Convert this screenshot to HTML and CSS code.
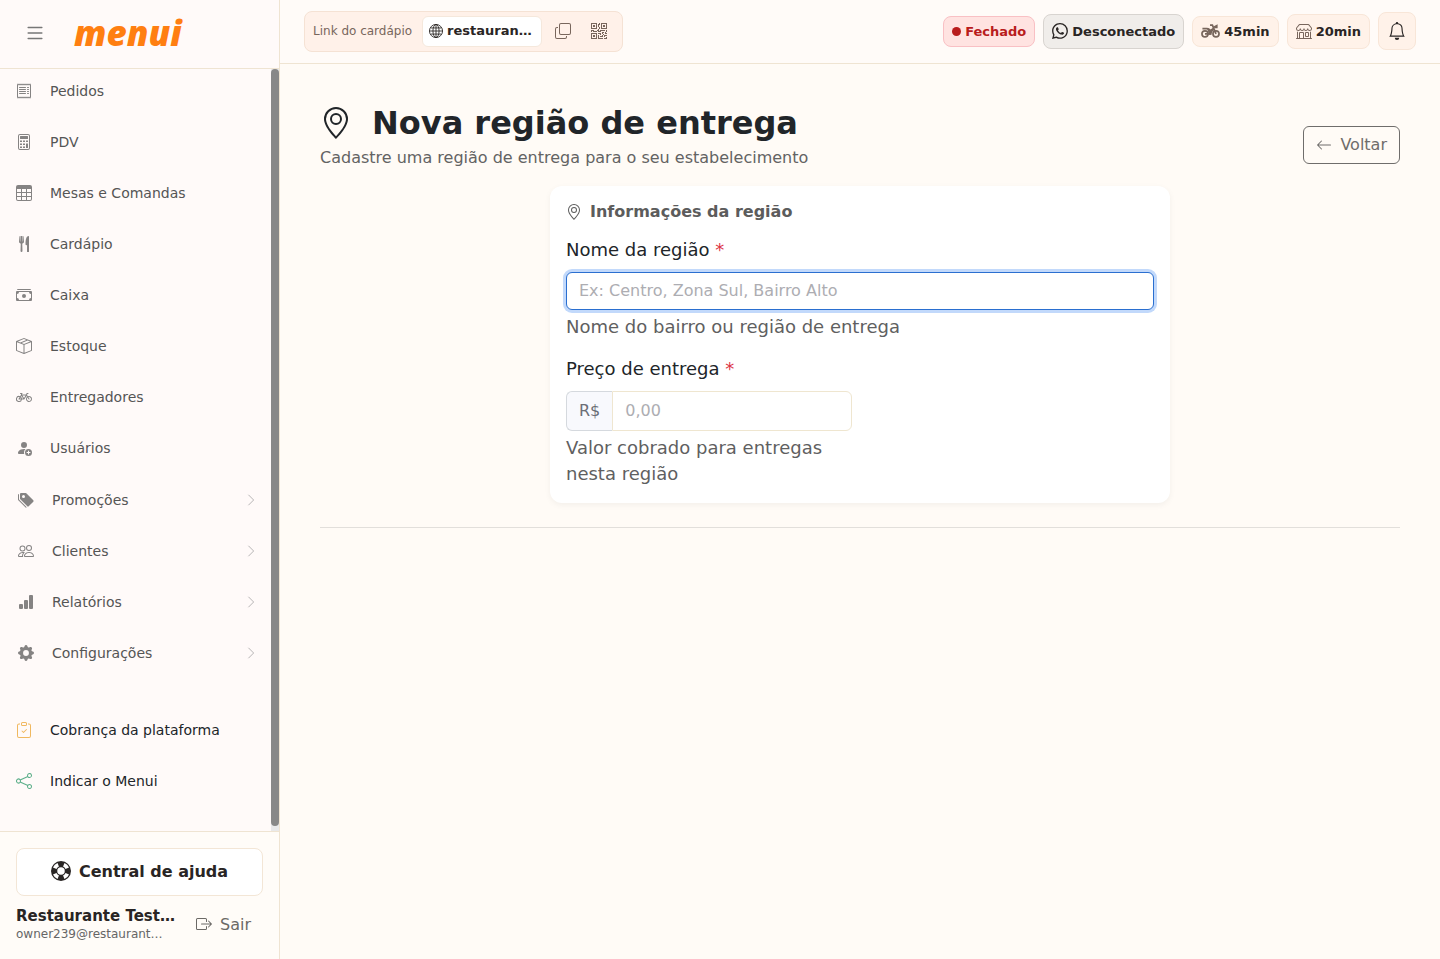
FILE: index.html
```html
<!DOCTYPE html>
<html lang="pt-BR">
<head>
    <meta charset="UTF-8">
    <meta name="viewport" content="width=device-width, initial-scale=1.0">
    <title>Nova região de entrega</title>
    <link rel="stylesheet" href="styles.css">
</head>
<body>
    <div class="app">
        <!-- Sidebar -->
        <aside class="sidebar">
            <div class="sidebar-header">
                <button type="button" class="menu-toggle" aria-label="Menu">
                    <svg class="icon" viewBox="0 0 16 16"><path fill-rule="evenodd" d="M2.500 12a.5.5 0 0 1 .5-.5h10a.5.5 0 0 1 0 1H3a.5.5 0 0 1-.5-.5m0-4a.5.5 0 0 1 .5-.5h10a.5.5 0 0 1 0 1H3a.5.5 0 0 1-.5-.5m0-4a.5.5 0 0 1 .5-.5h10a.5.5 0 0 1 0 1H3a.5.5 0 0 1-.5-.5"/></svg>
                </button>
                <a href="#" class="logo">menui</a>
            </div>

            <div class="sidebar-body">
                <nav class="sidebar-nav">
                    <ul class="nav-list">
                        <li><a href="#" class="nav-link">
                            <svg class="icon" viewBox="0 0 16 16"><path d="M1.920.506a.5.5 0 0 1 .434.14L3 1.293l.646-.647a.5.5 0 0 1 .708 0L5 1.293l.646-.647a.5.5 0 0 1 .708 0L7 1.293l.646-.647a.5.5 0 0 1 .708 0L9 1.293l.646-.647a.5.5 0 0 1 .708 0l.646.647.646-.647a.5.5 0 0 1 .708 0l.646.647.646-.647a.5.5 0 0 1 .801.13l.5 1A.5.5 0 0 1 15 2v12a.5.5 0 0 1-.053.224l-.5 1a.5.5 0 0 1-.8.13L13 14.707l-.646.647a.5.5 0 0 1-.708 0L11 14.707l-.646.647a.5.5 0 0 1-.708 0L9 14.707l-.646.647a.5.5 0 0 1-.708 0L7 14.707l-.646.647a.5.5 0 0 1-.708 0L5 14.707l-.646.647a.5.5 0 0 1-.708 0L3 14.707l-.646.647a.5.5 0 0 1-.801-.13l-.5-1A.5.5 0 0 1 1 14V2a.5.5 0 0 1 .053-.224l.5-1a.5.5 0 0 1 .367-.27m.217 1.338L2 2.118v11.764l.137.274.51-.51a.5.5 0 0 1 .707 0l.646.647.646-.646a.5.5 0 0 1 .708 0l.646.646.646-.646a.5.5 0 0 1 .708 0l.646.646.646-.646a.5.5 0 0 1 .708 0l.646.646.646-.646a.5.5 0 0 1 .708 0l.646.646.646-.646a.5.5 0 0 1 .708 0l.509.509.137-.274V2.118l-.137-.274-.51.51a.5.5 0 0 1-.707 0L12 1.707l-.646.647a.5.5 0 0 1-.708 0L10 1.707l-.646.647a.5.5 0 0 1-.708 0L8 1.707l-.646.647a.5.5 0 0 1-.708 0L6 1.707l-.646.647a.5.5 0 0 1-.708 0L4 1.707l-.646.647a.5.5 0 0 1-.708 0z"/><path d="M3 4.500a.5.5 0 0 1 .5-.5h6a.5.5 0 1 1 0 1h-6a.5.5 0 0 1-.5-.5m0 2a.5.5 0 0 1 .5-.5h6a.5.5 0 1 1 0 1h-6a.5.5 0 0 1-.5-.5m0 2a.5.5 0 0 1 .5-.5h6a.5.5 0 1 1 0 1h-6a.5.5 0 0 1-.5-.5m0 2a.5.5 0 0 1 .5-.5h6a.5.5 0 0 1 0 1h-6a.5.5 0 0 1-.5-.5m8-6a.5.5 0 0 1 .5-.5h1a.5.5 0 0 1 0 1h-1a.5.5 0 0 1-.5-.5m0 2a.5.5 0 0 1 .5-.5h1a.5.5 0 0 1 0 1h-1a.5.5 0 0 1-.5-.5m0 2a.5.5 0 0 1 .5-.5h1a.5.5 0 0 1 0 1h-1a.5.5 0 0 1-.5-.5m0 2a.5.5 0 0 1 .5-.5h1a.5.5 0 0 1 0 1h-1a.5.5 0 0 1-.5-.5"/></svg>
                            <span>Pedidos</span></a></li>
                        <li><a href="#" class="nav-link">
                            <svg class="icon" viewBox="0 0 16 16"><path d="M12 1a1 1 0 0 1 1 1v12a1 1 0 0 1-1 1H4a1 1 0 0 1-1-1V2a1 1 0 0 1 1-1zM4 0a2 2 0 0 0-2 2v12a2 2 0 0 0 2 2h8a2 2 0 0 0 2-2V2a2 2 0 0 0-2-2z"/><path d="M4 2.500a.5.5 0 0 1 .5-.5h7a.5.5 0 0 1 .5.5v2a.5.5 0 0 1-.5.5h-7a.5.5 0 0 1-.5-.5zM4 6.500h2v1.500H4zM7 6.500h2v1.500H7zM10 6.500h2v1.500h-2zM4 9.500h2v1.500H4zM7 9.500h2v1.500H7zM4 12.500h2V14H4zM7 12.500h2V14H7zM10 9.500h2V14h-2z"/></svg>
                            <span>PDV</span></a></li>
                        <li><a href="#" class="nav-link">
                            <svg class="icon" viewBox="0 0 16 16"><path d="M0 2a2 2 0 0 1 2-2h12a2 2 0 0 1 2 2v12a2 2 0 0 1-2 2H2a2 2 0 0 1-2-2zm15 2h-4v3h4zm0 4h-4v3h4zm0 4h-4v3h3a1 1 0 0 0 1-1zm-5 3v-3H6v3zm-5 0v-3H1v2a1 1 0 0 0 1 1zm-4-4h4V8H1zm0-4h4V4H1zm5-3v3h4V4zm4 4H6v3h4z"/></svg>
                            <span>Mesas e Comandas</span></a></li>
                        <li><a href="#" class="nav-link">
                            <svg class="icon" viewBox="0 0 16 16"><path d="M13 .500c0-.276-.226-.506-.498-.465-1.703.257-2.940 2.012-3 8.462a.5.5 0 0 0 .498.5c.56.010 1 .130 1 1.003v5.500a.5.5 0 0 0 .5.5h1a.5.5 0 0 0 .5-.5zM4.250 0a.25.25 0 0 1 .25.25v5.122a.128.128 0 0 0 .256.006l.233-5.140A.25.25 0 0 1 5.240 0h.522a.25.25 0 0 1 .25.238l.233 5.140a.128.128 0 0 0 .256-.006V.250A.25.25 0 0 1 6.750 0h.290a.5.5 0 0 1 .498.458l.423 5.070a1.690 1.690 0 0 1-1.059 1.711l-.053.022a.92.92 0 0 0-.58.884L6.470 15a.971.971 0 1 1-1.942 0l.202-6.855a.92.92 0 0 0-.58-.884l-.053-.022a1.690 1.690 0 0 1-1.059-1.712L3.462.458A.5.5 0 0 1 3.960 0z"/></svg>
                            <span>Cardápio</span></a></li>
                        <li><a href="#" class="nav-link">
                            <svg class="icon" viewBox="0 0 16 16"><path d="M1 3a1 1 0 0 1 1-1h12a1 1 0 0 1 1 1zm7 8a2 2 0 1 0 0-4 2 2 0 0 0 0 4"/><path d="M0 5a1 1 0 0 1 1-1h14a1 1 0 0 1 1 1v8a1 1 0 0 1-1 1H1a1 1 0 0 1-1-1zm3 0a2 2 0 0 1-2 2v4a2 2 0 0 1 2 2h10a2 2 0 0 1 2-2V7a2 2 0 0 1-2-2z"/></svg>
                            <span>Caixa</span></a></li>
                        <li><a href="#" class="nav-link">
                            <svg class="icon" viewBox="0 0 16 16"><path d="M8.186 1.113a.5.5 0 0 0-.372 0L1.846 3.500l2.404.961L10.404 2zm3.564 1.426L5.596 5 8 5.961 14.154 3.500zm3.250 1.700-6.500 2.600v7.922l6.500-2.600V4.240zM7.500 14.762V6.838L1 4.239v7.923zM7.443.184a1.500 1.500 0 0 1 1.114 0l7.129 2.852A.5.5 0 0 1 16 3.500v8.662a1 1 0 0 1-.629.928l-7.185 2.874a.5.5 0 0 1-.372 0L.630 13.090a1 1 0 0 1-.630-.928V3.500a.5.5 0 0 1 .314-.464z"/></svg>
                            <span>Estoque</span></a></li>
                        <li><a href="#" class="nav-link">
                            <svg class="icon" viewBox="0 0 16 16"><path d="M4 4.500a.5.5 0 0 1 .5-.5H6a.5.5 0 0 1 0 1v.5h4.140l.386-1.158A.5.5 0 0 1 11 4h1a.5.5 0 0 1 0 1h-.640l-.311.935.807 1.290a3 3 0 1 1-.848.530l-.508-.812-2.076 3.322A.5.5 0 0 1 8 10.500H5.959a3 3 0 1 1-1.815-3.274L5 5.856V5h-.5a.5.5 0 0 1-.5-.5m1.500 2.443-.508.814c.5.444.850 1.054.967 1.743h1.139zM8 9.057 9.598 6.500H6.402zM4.937 9.500a2 2 0 0 0-.487-.877l-.548.877zM3.603 8.092A2 2 0 1 0 4.937 10.500H3a.5.5 0 0 1-.424-.765zm7.947.530a2 2 0 1 0 .848-.530l1.026 1.643a.5.5 0 1 1-.848.530z"/></svg>
                            <span>Entregadores</span></a></li>
                        <li><a href="#" class="nav-link">
                            <svg class="icon" viewBox="0 0 16 16"><path d="M12.500 16a3.500 3.500 0 1 0 0-7 3.500 3.500 0 0 0 0 7m.5-5v1h1a.5.5 0 0 1 0 1h-1v1a.5.5 0 0 1-1 0v-1h-1a.5.5 0 0 1 0-1h1v-1a.5.5 0 0 1 1 0m-2-6a3 3 0 1 1-6 0 3 3 0 0 1 6 0"/><path d="M2 13c0 1 1 1 1 1h5.256A4.500 4.500 0 0 1 8 12.500a4.500 4.500 0 0 1 1.544-3.393Q8.844 9.002 8 9c-5 0-6 3-6 4"/></svg>
                            <span>Usuários</span></a></li>
                    </ul>

                    <!-- Groups with submenu -->
                    <ul class="nav-list nav-groups">
                        <li><button type="button" class="nav-link">
                            <svg class="icon" viewBox="0 0 16 16"><path d="M2 2a1 1 0 0 1 1-1h4.586a1 1 0 0 1 .707.293l7 7a1 1 0 0 1 0 1.414l-4.586 4.586a1 1 0 0 1-1.414 0l-7-7A1 1 0 0 1 2 6.586zm3.500 4a1.500 1.500 0 1 0 0-3 1.500 1.500 0 0 0 0 3"/><path d="M1.293 7.793A1 1 0 0 1 1 7.086V2a1 1 0 0 0-1 1v4.586a1 1 0 0 0 .293.707l7 7a1 1 0 0 0 1.414 0l.043-.043z"/></svg>
                            <span>Promoções</span>
                            <svg class="chevron" viewBox="0 0 16 16"><path d="M5 2l6 6-6 6"/></svg></button></li>
                        <li><button type="button" class="nav-link">
                            <svg class="icon" viewBox="0 0 16 16"><path d="M15 14s1 0 1-1-1-4-5-4-5 3-5 4 1 1 1 1zm-7.978-1L7 12.996c.001-.264.167-1.030.760-1.720C8.312 10.629 9.282 10 11 10c1.717 0 2.687.630 3.240 1.276.593.690.758 1.457.760 1.720l-.008.002-.014.002zM11 7a2 2 0 1 0 0-4 2 2 0 0 0 0 4m3-2a3 3 0 1 1-6 0 3 3 0 0 1 6 0M6.936 9.280a6 6 0 0 0-1.230-.247A7 7 0 0 0 5 9c-4 0-5 3-5 4q0 1 1 1h4.216A2.240 2.240 0 0 1 5 13c0-1.010.377-2.042 1.090-2.904.243-.294.526-.569.846-.816M4.920 10A5.500 5.500 0 0 0 4 13H1c0-.260.164-1.030.760-1.724.545-.636 1.492-1.256 3.160-1.275ZM1.500 5.500a3 3 0 1 1 6 0 3 3 0 0 1-6 0m3-2a2 2 0 1 0 0 4 2 2 0 0 0 0-4"/></svg>
                            <span>Clientes</span>
                            <svg class="chevron" viewBox="0 0 16 16"><path d="M5 2l6 6-6 6"/></svg></button></li>
                        <li><button type="button" class="nav-link">
                            <svg class="icon" viewBox="0 0 16 16"><path d="M1 11a1 1 0 0 1 1-1h2a1 1 0 0 1 1 1v3a1 1 0 0 1-1 1H2a1 1 0 0 1-1-1zm5-4a1 1 0 0 1 1-1h2a1 1 0 0 1 1 1v7a1 1 0 0 1-1 1H7a1 1 0 0 1-1-1zm5-5a1 1 0 0 1 1-1h2a1 1 0 0 1 1 1v12a1 1 0 0 1-1 1h-2a1 1 0 0 1-1-1z"/></svg>
                            <span>Relatórios</span>
                            <svg class="chevron" viewBox="0 0 16 16"><path d="M5 2l6 6-6 6"/></svg></button></li>
                        <li><button type="button" class="nav-link">
                            <svg class="icon" viewBox="0 0 16 16"><path d="M9.405 1.050c-.413-1.400-2.397-1.400-2.810 0l-.100.340a1.464 1.464 0 0 1-2.105.872l-.310-.170c-1.283-.698-2.686.705-1.987 1.987l.169.311c.446.820.023 1.841-.872 2.105l-.340.100c-1.400.413-1.400 2.397 0 2.810l.340.100a1.464 1.464 0 0 1 .872 2.105l-.170.310c-.698 1.283.705 2.686 1.987 1.987l.311-.169a1.464 1.464 0 0 1 2.105.872l.100.340c.413 1.400 2.397 1.400 2.810 0l.100-.340a1.464 1.464 0 0 1 2.105-.872l.310.170c1.283.698 2.686-.705 1.987-1.987l-.169-.311a1.464 1.464 0 0 1 .872-2.105l.340-.100c1.400-.413 1.400-2.397 0-2.810l-.340-.100a1.464 1.464 0 0 1-.872-2.105l.170-.310c.698-1.283-.705-2.686-1.987-1.987l-.311.169a1.464 1.464 0 0 1-2.105-.872zM8 10.930a2.929 2.929 0 1 1 0-5.860 2.929 2.929 0 0 1 0 5.858z"/></svg>
                            <span>Configurações</span>
                            <svg class="chevron" viewBox="0 0 16 16"><path d="M5 2l6 6-6 6"/></svg></button></li>
                    </ul>

                    <ul class="nav-list nav-extra">
                        <li><a href="#" class="nav-link">
                            <svg class="icon icon-billing" viewBox="0 0 16 16"><path fill-rule="evenodd" d="M10.854 7.146a.5.5 0 0 1 0 .708l-3 3a.5.5 0 0 1-.708 0l-1.500-1.500a.5.5 0 1 1 .708-.708L7.500 9.793l2.646-2.647a.5.5 0 0 1 .708 0"/><path d="M4 1.500H3a2 2 0 0 0-2 2V14a2 2 0 0 0 2 2h10a2 2 0 0 0 2-2V3.500a2 2 0 0 0-2-2h-1v1h1a1 1 0 0 1 1 1V14a1 1 0 0 1-1 1H3a1 1 0 0 1-1-1V3.500a1 1 0 0 1 1-1h1z"/><path d="M9.500 1a.5.5 0 0 1 .5.5v1a.5.5 0 0 1-.5.5h-3a.5.5 0 0 1-.5-.5v-1a.5.5 0 0 1 .5-.5zm-3-1A1.500 1.500 0 0 0 5 1.500v1A1.500 1.500 0 0 0 6.500 4h3A1.500 1.500 0 0 0 11 2.500v-1A1.500 1.500 0 0 0 9.500 0z"/></svg>
                            <span>Cobrança da plataforma</span></a></li>
                        <li><a href="#" class="nav-link">
                            <svg class="icon icon-share" viewBox="0 0 16 16"><path d="M13.500 1a1.500 1.500 0 1 0 0 3 1.500 1.500 0 0 0 0-3M11 2.500a2.500 2.500 0 1 1 .603 1.628l-6.718 3.120a2.500 2.500 0 0 1 0 1.504l6.718 3.120a2.500 2.500 0 1 1-.488.876l-6.718-3.120a2.500 2.500 0 1 1 0-3.256l6.718-3.120A2.500 2.500 0 0 1 11 2.500m-8.500 4a1.500 1.500 0 1 0 0 3 1.500 1.500 0 0 0 0-3m11 5.500a1.500 1.500 0 1 0 0 3 1.500 1.500 0 0 0 0-3"/></svg>
                            <span>Indicar o Menui</span></a></li>
                    </ul>
                </nav>
                <div class="scrollbar"><div class="scrollbar-thumb"></div></div>
            </div>

            <div class="sidebar-footer">
                <button type="button" class="help-btn">
                    <svg class="icon" viewBox="0 0 16 16"><path d="M8 16A8 8 0 1 0 8 0a8 8 0 0 0 0 16m6.430-5.228a7.030 7.030 0 0 1-3.658 3.658l-1.115-2.788a4 4 0 0 0 1.985-1.985zM5.228 14.430a7.030 7.030 0 0 1-3.658-3.658l2.788-1.115a4 4 0 0 0 1.985 1.985zm9.202-9.202-2.788 1.115a4 4 0 0 0-1.985-1.985l1.115-2.788a7.030 7.030 0 0 1 3.658 3.658m-8.087-.870a4 4 0 0 0-1.985 1.985L1.570 5.228A7.030 7.030 0 0 1 5.228 1.570zM8 11a3 3 0 1 1 0-6 3 3 0 0 1 0 6"/></svg>
                    Central de ajuda
                </button>
                <div class="user-row">
                    <div class="user-info">
                        <div class="user-name">Restaurante Test…</div>
                        <div class="user-email">owner239@restaurant…</div>
                    </div>
                    <button type="button" class="logout-btn">
                        <svg class="icon" viewBox="0 0 16 16"><path fill-rule="evenodd" d="M10 12.500a.5.5 0 0 1-.5.5h-8a.5.5 0 0 1-.5-.5v-9a.5.5 0 0 1 .5-.5h8a.5.5 0 0 1 .5.5v2a.5.5 0 0 0 1 0v-2A1.500 1.500 0 0 0 9.500 2h-8A1.500 1.500 0 0 0 0 3.500v9A1.500 1.500 0 0 0 1.500 14h8a1.500 1.500 0 0 0 1.500-1.500v-2a.5.5 0 0 0-1 0z"/><path fill-rule="evenodd" d="M15.854 8.354a.5.5 0 0 0 0-.708l-3-3a.5.5 0 0 0-.708.708L14.293 7.500H5.500a.5.5 0 0 0 0 1h8.793l-2.147 2.146a.5.5 0 0 0 .708.708z"/></svg>
                        Sair
                    </button>
                </div>
            </div>
        </aside>

        <div class="main">
            <!-- Top bar -->
            <header class="topbar">
                <div class="menu-link">
                    <span class="menu-link-label">Link do cardápio</span>
                    <a href="#" class="menu-link-url">
                        <svg class="icon" viewBox="0 0 16 16"><g fill="none" stroke="currentColor"><circle cx="8" cy="8" r="7.500"/><ellipse cx="8" cy="8" rx="3.500" ry="7.500"/><path d="M8 .5v15M.5 8h15M1.700 4.500h12.600M1.700 11.500h12.600"/></g></svg>
                        <span>restauran…</span>
                    </a>
                    <button type="button" class="icon-btn" aria-label="Copiar link">
                        <svg class="icon" viewBox="0 0 16 16"><path fill-rule="evenodd" d="M4 2a2 2 0 0 1 2-2h8a2 2 0 0 1 2 2v8a2 2 0 0 1-2 2H6a2 2 0 0 1-2-2zm2-1a1 1 0 0 0-1 1v8a1 1 0 0 0 1 1h8a1 1 0 0 0 1-1V2a1 1 0 0 0-1-1zM2 5a1 1 0 0 0-1 1v8a1 1 0 0 0 1 1h8a1 1 0 0 0 1-1v-1h1v1a2 2 0 0 1-2 2H2a2 2 0 0 1-2-2V6a2 2 0 0 1 2-2h1v1z"/></svg>
                    </button>
                    <button type="button" class="icon-btn" aria-label="QR Code">
                        <svg class="icon" viewBox="0 0 16 16"><path d="M2 2h2v2H2z"/><path d="M6 0v6H0V0zM5 1H1v4h4zM4 12H2v2h2z"/><path d="M6 10v6H0v-6zm-5 1v4h4v-4zm11-9h2v2h-2z"/><path d="M10 0v6h6V0zm5 1v4h-4V1zM8 1V0h1v2H8v2H7V1zm0 5V4h1v2zM6 8V7h1V6h1v2h1V7h5v1h-4v1H7V8zm0 0v1H2V8H1v1H0V7h3v1zm10 1h-1V7h1zm-1 0h-1v2h2v-1h-1zm-4 0h2v1h-1v1h-1zm2 3v-1h-1v1h-1v1H9v1h3v-2zm0 0h3v1h-2v1h-1zm-4-1v1h1v-2H7v1z"/><path d="M7 12h1v3h4v1H7zm9 2v2h-3v-1h2v-1z"/></svg>
                    </button>
                </div>

                <div class="status-list">
                    <button type="button" class="badge badge-closed">
                        <svg class="dot" viewBox="0 0 10 10"><circle cx="5" cy="5" r="5"/></svg>
                        Fechado
                    </button>
                    <button type="button" class="badge badge-tall badge-whatsapp">
                        <svg class="icon" viewBox="0 0 16 16"><path d="M13.601 2.326A7.850 7.850 0 0 0 7.994 0C3.627 0 .068 3.558.064 7.926c0 1.399.366 2.760 1.057 3.965L0 16l4.204-1.102a7.900 7.900 0 0 0 3.790.965h.004c4.368 0 7.926-3.558 7.930-7.930A7.900 7.900 0 0 0 13.600 2.326zM7.994 14.521a6.600 6.600 0 0 1-3.356-.920l-.240-.144-2.494.654.666-2.433-.156-.251a6.560 6.560 0 0 1-1.007-3.505c0-3.626 2.957-6.584 6.591-6.584a6.560 6.560 0 0 1 4.660 1.931 6.560 6.560 0 0 1 1.928 4.660c-.004 3.639-2.961 6.592-6.592 6.592"/><path d="M11.610 9.585c-.197-.099-1.170-.578-1.353-.646-.182-.065-.315-.099-.445.099-.133.197-.513.646-.627.775-.114.133-.232.148-.430.050-.197-.100-.836-.308-1.592-.985-.590-.525-.985-1.175-1.103-1.372-.114-.198-.011-.304.088-.403.087-.088.197-.232.296-.346.100-.114.133-.198.198-.330.065-.134.034-.248-.015-.347-.050-.099-.445-1.076-.612-1.470-.160-.389-.323-.335-.445-.340-.114-.007-.247-.007-.380-.007a.73.73 0 0 0-.529.247c-.182.198-.691.677-.691 1.654s.710 1.916.810 2.049c.098.133 1.394 2.132 3.383 2.992.470.205.840.326 1.129.418.475.152.904.129 1.246.080.380-.058 1.171-.480 1.338-.943.164-.464.164-.860.114-.943-.049-.084-.182-.133-.380-.232"/></svg>
                        Desconectado
                    </button>
                    <button type="button" class="badge">
                        <svg class="icon icon-moto" viewBox="0 0 20 16"><g fill="none" stroke="currentColor" stroke-width="1.800"><circle cx="4.200" cy="11" r="3.200"/><circle cx="15.800" cy="11" r="3.200"/><path d="M9.500 1.800h2.500l3.800 9.200M1.500 5.500h4.500c2.200 0 3.500 1.500 3.500 3.500v2H4.200"/></g><path d="M6.500 5.500l3.500 1 3-2.200 1.200 2.700c-2 .800-3 2.500-3 5H8.500z"/><path d="M13.500 3l4-2v4.200H14z"/></svg>
                        45min
                    </button>
                    <button type="button" class="badge badge-tall">
                        <svg class="icon" viewBox="0 0 16 16"><path d="M2.970 1.350A1 1 0 0 1 3.730 1h8.540a1 1 0 0 1 .760.350l2.609 3.044A1.500 1.500 0 0 1 16 5.370v.255a2.375 2.375 0 0 1-4.250 1.458A2.370 2.370 0 0 1 9.875 8 2.370 2.370 0 0 1 8 7.083 2.370 2.370 0 0 1 6.125 8a2.370 2.370 0 0 1-1.875-.917A2.375 2.375 0 0 1 0 5.625V5.370a1.500 1.500 0 0 1 .361-.976zm1.780 4.275a1.375 1.375 0 0 0 2.750 0 .5.5 0 0 1 1 0 1.375 1.375 0 0 0 2.750 0 .5.5 0 0 1 1 0 1.375 1.375 0 1 0 2.750 0V5.370a.5.5 0 0 0-.120-.325L12.270 2H3.730L1.120 5.045A.5.5 0 0 0 1 5.370v.255a1.375 1.375 0 0 0 2.750 0 .5.5 0 0 1 1 0M1.500 8.500A.5.5 0 0 1 2 9v6h1v-5a1 1 0 0 1 1-1h3a1 1 0 0 1 1 1v5h6V9a.5.5 0 0 1 1 0v6h.5a.5.5 0 0 1 0 1H.5a.5.5 0 0 1 0-1H1V9a.5.5 0 0 1 .5-.5M4 15h3v-5H4zm5-5a1 1 0 0 1 1-1h2a1 1 0 0 1 1 1v3a1 1 0 0 1-1 1h-2a1 1 0 0 1-1-1zm3 0h-2v3h2z"/></svg>
                        20min
                    </button>
                    <button type="button" class="bell-btn" aria-label="Notificações">
                        <svg class="icon" viewBox="0 0 16 16"><path d="M8 16a2 2 0 0 0 2-2H6a2 2 0 0 0 2 2M8 1.918l-.797.161A4 4 0 0 0 4 6c0 .628-.134 2.197-.459 3.742-.160.767-.376 1.566-.663 2.258h10.244c-.287-.692-.502-1.490-.663-2.258C12.134 8.197 12 6.628 12 6a4 4 0 0 0-3.203-3.920zM14.220 12c.223.447.481.801.780 1H1c.299-.199.557-.553.780-1C2.680 10.200 3 6.880 3 6c0-2.420 1.720-4.440 4.005-4.901a1 1 0 1 1 1.990 0A5 5 0 0 1 13 6c0 .880.320 4.200 1.220 6"/></svg>
                    </button>
                </div>
            </header>

            <main class="content">
                <div class="page-header">
                    <div>
                        <h1 class="page-title">
                            <svg class="icon" viewBox="0 0 16 16"><path d="M12.166 8.940c-.524 1.062-1.234 2.120-1.960 3.070A32 32 0 0 1 8 14.580a32 32 0 0 1-2.206-2.570c-.726-.950-1.436-2.008-1.960-3.070C3.304 7.867 3 6.862 3 6a5 5 0 0 1 10 0c0 .862-.305 1.867-.834 2.940M8 16s6-5.686 6-10A6 6 0 0 0 2 6c0 4.314 6 10 6 10"/><path d="M8 8a2 2 0 1 1 0-4 2 2 0 0 1 0 4m0 1a3 3 0 1 0 0-6 3 3 0 0 0 0 6"/></svg>
                            Nova região de entrega
                        </h1>
                        <p class="page-subtitle">Cadastre uma região de entrega para o seu estabelecimento</p>
                    </div>
                    <a href="#" class="back-btn">
                        <svg class="icon" viewBox="0 0 16 16"><path fill-rule="evenodd" d="M15 8a.5.5 0 0 0-.5-.5H2.707l3.147-3.146a.5.5 0 1 0-.708-.708l-4 4a.5.5 0 0 0 0 .708l4 4a.5.5 0 0 0 .708-.708L2.707 8.500H14.500A.5.5 0 0 0 15 8"/></svg>
                        Voltar
                    </a>
                </div>

                <form class="card">
                    <h2 class="card-title">
                        <svg class="icon" viewBox="0 0 16 16"><path d="M12.166 8.940c-.524 1.062-1.234 2.120-1.960 3.070A32 32 0 0 1 8 14.580a32 32 0 0 1-2.206-2.570c-.726-.950-1.436-2.008-1.960-3.070C3.304 7.867 3 6.862 3 6a5 5 0 0 1 10 0c0 .862-.305 1.867-.834 2.940M8 16s6-5.686 6-10A6 6 0 0 0 2 6c0 4.314 6 10 6 10"/><path d="M8 8a2 2 0 1 1 0-4 2 2 0 0 1 0 4m0 1a3 3 0 1 0 0-6 3 3 0 0 0 0 6"/></svg>
                        Informações da região
                    </h2>

                    <div class="form-row">
                        <div class="form-group form-group-full">
                            <label for="nome">Nome da região <span class="required">*</span></label>
                            <input type="text" id="nome" name="nome" class="form-control" placeholder="Ex: Centro, Zona Sul, Bairro Alto" required autofocus>
                            <div class="form-text">Nome do bairro ou região de entrega</div>
                        </div>

                        <div class="form-group">
                            <label for="preco">Preço de entrega <span class="required">*</span></label>
                            <div class="input-group">
                                <span class="input-group-text">R$</span>
                                <input type="text" id="preco" name="preco" class="form-control" placeholder="0,00" inputmode="decimal" required>
                            </div>
                            <div class="form-text">Valor cobrado para entregas nesta região</div>
                        </div>
                    </div>
                </form>

                <hr class="divider">
            </main>
        </div>
    </div>
</body>
</html>
```

FILE: styles.css
```css
* { box-sizing: border-box; }
body { margin: 0; font-family: "DejaVu Sans", sans-serif; font-size: 16px; line-height: 24px; color: #212529; background-color: #fffbf6; }
button, input { font-family: inherit; font-size: inherit; }
button { cursor: pointer; }
a { color: inherit; text-decoration: none; }
.icon { width: 16px; height: 16px; fill: currentColor; flex-shrink: 0; }
.app { display: flex; height: 100vh; }

/* Sidebar */
.sidebar { width: 280px; flex-shrink: 0; display: flex; flex-direction: column; background-color: #fffaf9; border-right: 1px solid #efe4d2; }
.sidebar-header { display: flex; align-items: center; gap: 28px; height: 69px; flex-shrink: 0; padding: 0 24px 2px; border-bottom: 1px solid #efe4d2; }
.menu-toggle { display: flex; padding: 0; border: none; background: none; color: #777; }
.menu-toggle .icon { width: 22px; height: 22px; }
.logo { color: #ff7f11; font-family: "Open Sans", sans-serif; font-size: 35px; line-height: 48px; font-weight: 800; font-style: italic; }

.sidebar-body { flex: 1; min-height: 0; display: flex; }
.sidebar-nav { flex: 1; min-width: 0; overflow-y: auto; scrollbar-width: none; }
.scrollbar { width: 8px; padding-bottom: 5px; background-color: #e9e9ea; }
.scrollbar-thumb { height: 100%; border-radius: 4px; background-color: #888; }
.nav-list { display: flex; flex-direction: column; gap: 8px; list-style: none; margin: 0; padding: 0; }
.nav-link { display: flex; align-items: center; gap: 18px; width: 100%; height: 43px; padding: 0 16px; border: none; background: none; font-size: 14px; color: #555; text-align: left; }
.nav-link .icon { color: #858383; }
.nav-groups { margin-top: 9px; }
.nav-groups .nav-link { padding: 0 13px 0 18px; }
.nav-link .chevron { width: 14px; height: 14px; margin-left: auto; fill: none; stroke: #aaa; stroke-width: 1; }
.nav-extra { margin-top: 34px; padding-bottom: 34px; }
.nav-extra .nav-link { color: #212529; }
.nav-extra .icon-billing { color: #f0b860; }
.nav-extra .icon-share { color: #5fb08c; }

.sidebar-footer { height: 128px; flex-shrink: 0; padding: 16px; border-top: 1px solid #efe4d2; background-color: #fffcf8; }
.help-btn { display: flex; align-items: center; justify-content: center; gap: 8px; width: 100%; height: 48px; padding: 0 0 2px; border: 1px solid #f3e6d6; border-radius: 8px; background-color: #fff; color: #292524; font-weight: bold; }
.help-btn .icon { width: 20px; height: 20px; }
.user-row { display: flex; align-items: center; gap: 20px; margin-top: 10px; }
.user-info { width: 160px; white-space: nowrap; }
.user-name { font-size: 15px; line-height: 20px; font-weight: bold; color: #292524; }
.user-email { font-size: 12px; line-height: 16px; color: #666; }
.logout-btn { display: flex; align-items: center; gap: 8px; padding: 0; border: none; background: none; color: #6b6966; }

/* Top bar */
.main { flex: 1; min-width: 0; display: flex; flex-direction: column; }
.topbar { display: flex; align-items: center; justify-content: space-between; height: 64px; flex-shrink: 0; padding: 0 24px 1px; background-color: #fffbf8; border-bottom: 1px solid #efe4d2; }
.menu-link { display: flex; align-items: center; height: 41px; padding: 0 5px 0 8px; border: 1px solid #f5e2d4; border-radius: 8px; background-color: #fff1e9; color: #78665c; }
.menu-link-label { font-size: 12px; margin-right: 10px; }
.menu-link-url { display: flex; align-items: center; gap: 4px; width: 120px; height: 31px; padding: 0 6px; margin-right: 3px; border: 1px solid #f5e8dc; border-radius: 6px; background-color: #fff; color: #292524; font-size: 13px; font-weight: bold; white-space: nowrap; }
.menu-link-url .icon { width: 14px; height: 14px; }
.icon-btn { display: flex; align-items: center; justify-content: center; width: 36px; height: 30px; padding: 0; border: none; background: none; color: #78665c; }
.status-list { display: flex; align-items: center; gap: 8px; }
.badge { display: flex; align-items: center; gap: 4px; height: 31px; padding: 0 8px; border: 1px solid #f8e6d8; border-radius: 8px; background-color: #fff2e9; color: #292524; font-size: 13px; font-weight: bold; }
.badge .icon { color: #78665c; }
.badge .dot { width: 9px; height: 9px; fill: currentColor; }
.badge .icon-moto { width: 19px; }
.badge-tall { height: 35px; }
.badge-closed { background-color: #ffe3e1; border-color: #f9c0c4; color: #b91c1c; }
.badge-whatsapp { background-color: #f0edea; border-color: #d8d4d0; }
.badge-whatsapp .icon { color: #292524; }
.bell-btn { display: flex; align-items: center; justify-content: center; width: 38px; height: 38px; padding: 0; border: 1px solid #f8e6d8; border-radius: 8px; background-color: #fff2e9; color: #292524; }
.bell-btn .icon { width: 18px; height: 18px; }

/* Page */
.content { flex: 1; padding: 40px; overflow-y: auto; }
.page-header { display: flex; align-items: flex-end; justify-content: space-between; margin-bottom: 16px; }
.page-title { display: flex; align-items: center; gap: 20px; margin: 0 0 4px; font-size: 32px; line-height: 38px; font-weight: bold; }
.page-title .icon { width: 32px; height: 32px; }
.page-subtitle { margin: 0; color: #636363; }
.back-btn { display: flex; align-items: center; gap: 8px; height: 38px; padding: 0 12px; margin-bottom: 6px; border: 1px solid #6f6d6b; border-radius: 6px; color: #6f6d6b; }

.card { max-width: 620px; margin: 0 auto 24px; padding: 14px 16px 16px; border-radius: 12px; background-color: #fff; box-shadow: 0 2px 6px rgba(0, 0, 0, 0.05); }
.card-title { display: flex; align-items: center; gap: 8px; margin: 0 0 13px; font-size: 16px; line-height: 24px; font-weight: bold; color: #5c5c5c; }
.form-row { display: grid; grid-template-columns: 1fr 1fr; gap: 16px; }
.form-group-full { grid-column: 1 / -1; }
label { display: block; margin-bottom: 9px; font-size: 18px; line-height: 26px; }
.required { color: #dc3545; }
.form-control { display: block; width: 100%; height: 38px; padding: 0 12px 2px; border: 1px solid #efe6d0; border-radius: 6px; background-color: #fff; color: #212529; outline: none; }
.form-control::placeholder { color: #adadb2; }
.form-control:focus { border-color: #2a6fd0; box-shadow: 0 0 0 3px #c2d9fb; }
.form-text { margin-top: 4px; font-size: 18px; line-height: 26px; color: #5f5f61; }
.input-group { display: flex; height: 40px; }
.input-group-text { display: flex; align-items: center; padding: 0 12px; border: 1px solid #d5d9de; border-right: none; border-radius: 6px 0 0 6px; background-color: #f8f9fd; color: #6c6e76; }
.input-group .form-control { flex: 1; min-width: 0; height: 40px; border-radius: 0 6px 6px 0; }
.divider { margin: 0; border: none; border-top: 1px solid #e2dfdb; }
```
